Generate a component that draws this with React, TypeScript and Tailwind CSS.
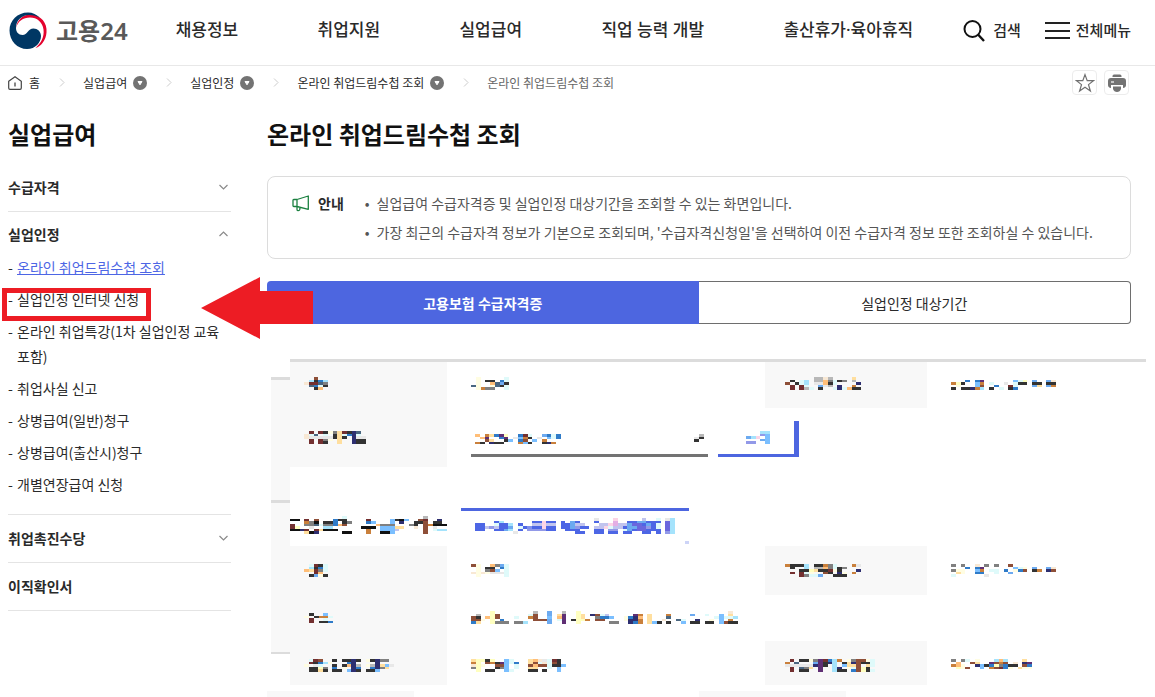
import clsx from 'clsx'
import { ReactNode } from 'react'

const COLORS: Record<string, string> = {
  k: '#333333',
  K: '#111111',
  g: '#808080',
  G: '#b8b8b8',
  e: '#e8e8e8',
  m: '#733030',
  r: '#8e4f38',
  b: '#2f7bc8',
  B: '#4a6680',
  n: '#2e2f70',
  s: '#7bbfff',
  c: '#a5e3fc',
  C: '#dffafa',
  y: '#ffffc0',
  Y: '#fffde2',
  o: '#ffbe78',
  O: '#c9803c',
  p: '#f8e8d4',
  t: '#ffdf9f',
  v: '#5f2f74',
  i: '#4d66e5',
  I: '#7f90ec',
  l: '#9299e8',
  L: '#c1c4ee',
  P: '#e4aee4',
  h: '#fcd4e6',
  a: '#6caaf0',
  V: '#6a66dd',
}

const MASKS = {
  name: ['..r..', '.ckbc', 'pmmBg', '.BbCk', '..ko.'],
  date: [
    '.m.mkYgtmknB.',
    'pCB.C.ktCbnC.',
    'peeeeektk.nee',
    '.m.mgY.t..nkk',
    '.m.mk..t..nkk',
  ],
  nameValue: ['.Y.....C', '.Y.kk.bC', '.Y..oBak', 'BY..YBkC', '.YOgg..C'],
  birth: [
    '......GGpG....t.',
    '.k.Cc.GGogCkg.G.',
    'r.kCc.eeokC....n',
    '.m.mC..aeG.n..O.',
    '.m.mGC.k..CnCokk',
  ],
  birthValue: [
    '......................',
    '...b.bv......sCy.a..ap',
    'Oyk..sO.C..e.Ckk.kk.kk',
    '.Y...sr..b..mC...at.aO',
    'k.kknOc.k.C.kb........',
  ],
  dateValue: [
    'o.Otbvy..bmC..abCb',
    '.ov..bv.esOk.e.sCb',
    '..rt..ks.br.s.O...',
    'Ok.nkk...Osk..knO.',
  ],
  caret: ['.G', 'ek', 'k.'],
  search: ['...cc', '...ls', 'ach.s', '...as', 'll..s'],
  heading: [
    '...........C................G....',
    'KK.m.r...bkk....m....skKs..rm..n.',
    '...OgK.kkb.kg...bs...s.n..kkr.kk.',
    'm..ggBCggbor......oggg...gk.rOKKK',
    'my..e..cc......KKK.ssstt..p.r.e..',
    'KKnm.mtKKK......O..sssL.....r.Ccc',
    '...tKn.....KK...O..KKs......r....',
  ],
  download: [
    '.........................e...h.....L..C.ec',
    '....ic......iihii.i.ai...i...P..iiaaiii.Vc',
    'ii..Ciic.i..LLhLL.iiaLL...LLhPLLaVViaiC.Vc',
    'iiLlLiia.CiIiihii.iialii.LLhCLLiaaVVliC.Vc',
    'ii..iiac.i.llllii..iii...ii.ll.CaiVViii.Vc',
    '........e............ii..ii.ii.ii..ii.i.lc',
  ],
  person: ['.CmkC', '.ckbC', 'otmgC', '..mo.', '.kaYk'],
  personValue: ['rY..ogaC', '.Y.kk.bC', '.Y.grs.C', 'pYpYeeeC', '.Y.....C'],
  number: [
    'Okkkc.kkOgC...Oe',
    '.k..c.GGogCkg...',
    '...kkytkkmYk...n',
    '.m.mCY..rk.nY.O.',
    '...mgCCa..kkk...',
  ],
  numberValue: [
    'g.g..p.g.g..r.........',
    '...b.bv......sCY.a..ap',
    'gYY..sO.CC.b.Ybr.kO.nr',
    '.tY..bb..C..a.........',
    'C......e..............',
  ],
  address: ['.k..s.', 'Y.kOOC', '.m..C.', '.m.kkb'],
  addressValue: [
    '....y........G..a..G..y...............................p.',
    '.G..yr......Cr..a.tv..yt.nrCL.....vO.t...O....a..C..s.t.',
    'rk.oyr...C..Or..s.ov..yt..gbbs..Ybno.t...B.........CsCCc',
    'rrY.y.b......rrra.Cv.kyyO.rr....YnnO.t..p..BC..n..Y.s.O.',
    'bt..yggg.ggc....a..v..y......gg..nbO.tsk.k..s.kk.kk.srkk',
  ],
  period: [
    '.Cmr..k.kknk.Ykngg.',
    '.mkbcY...bn....n...',
    'Y.eC..k.konG.YGntse',
    '.kkyg.b.Y.nb..bngt.',
    '.kktk.kk.snk.kks...',
  ],
  periodValue: [
    'tyyky..sC...topeCmk.',
    'Oy.rOkvsCb..trCpCrk.',
    'pyY..rrs.C..rorrCkks',
    'gy...kgs.C..tt..C.s.',
    '.y.kk..sC...kk.k..s.',
  ],
  office: [
    '.m.kkYgvmbcO.YgrrYC',
    'O.B...avknc.ktnrkkC',
    'eeeeeenvk.c.sttr.tC',
    '.m.Bgt.v..cn.YCryk.',
    '.m.kk..v..ckk.brykC',
  ],
  officeValue: [
    'g.gC.Y...coc...t.',
    '.o..rt..vrOr.p.nv',
    'OoY..nskbygbkk.rb',
    '.yYr..s.OrmbY.tYY',
  ],
}

// personal data is shown only as coarse colour blocks
const Masked = ({ rows }: { rows: string[] }) => {
  const cols = rows[0].length
  return (
    <svg
      className="block"
      width={Math.round((cols * 100) / 21)}
      height={Math.round(rows.length * 2.6)}
      viewBox={`0 0 ${cols} ${rows.length}`}
      preserveAspectRatio="none"
      shapeRendering="crispEdges"
      aria-hidden
    >
      {rows.flatMap((row, y) =>
        row
          .split('')
          .map((c, x) =>
            COLORS[c] ? (
              <rect
                key={`${x}-${y}`}
                x={x}
                y={y}
                width={1}
                height={1}
                fill={COLORS[c]}
              />
            ) : null
          )
      )}
    </svg>
  )
}

const Logo = () => (
  <svg width="40" height="40" viewBox="0 0 40 40" aria-hidden>
    <path
      d="M8 17C9 8 16 2.500 24 3.500C33 4.500 39.500 12 38.500 21.500C38 29 33 35.500 27.500 37C33 32 36.500 26 35.500 18.500C34.500 11 29 6.500 22 6.500C15 6.500 10 10 8 17Z"
      fill="#e4032e"
    />
    <path
      d="M20 1.500C9.500 1.500 1.500 9.500 1.500 19.500C1.500 30 9.500 38 19 38C27.500 38 33 31.500 33 25C33 20.500 29.500 17.500 25.500 17.500C20 17.500 19.500 24 14.500 24C10.500 24 8 21 8 17C8 9.500 13.500 4 21 4C25 4 29 5 32 7C29 3.500 24.500 1.500 20 1.500Z"
      fill="#003764"
    />
  </svg>
)

const SearchIcon = () => (
  <svg width="22" height="24" viewBox="0 0 22 24" fill="none" stroke="#111" aria-hidden>
    <circle cx="9.500" cy="10" r="8" strokeWidth="2" />
    <path d="M15 15.500L21 22" strokeWidth="2.400" />
  </svg>
)

const HamburgerIcon = () => (
  <svg width="25" height="19" viewBox="0 0 25 19" fill="#222" aria-hidden>
    <path d="M0 1h25v2H0zM0 9h25v2H0zM0 16h25v2H0z" />
  </svg>
)

const HomeIcon = () => (
  <svg width="14" height="14" viewBox="0 0 14 14" fill="none" stroke="#444" aria-hidden>
    <path
      d="M.7 5.300L7 .8l6.300 4.500v6.700q0 1.300-1.300 1.300H2Q.7 13.300.7 12z"
      strokeWidth="1.200"
    />
    <path d="M7 6.500v4" strokeWidth="1.300" />
  </svg>
)

const Chevron = ({ up }: { up?: boolean }) => (
  <svg
    width="9"
    height="6"
    viewBox="0 0 9 6"
    fill="none"
    stroke="#8a8a8a"
    strokeWidth="1.200"
    aria-hidden
  >
    <path d={up ? 'M.5 5l4-4 4 4' : 'M.5 1l4 4 4-4'} />
  </svg>
)

const Separator = () => (
  <svg width="6" height="9" viewBox="0 0 6 9" fill="none" stroke="#ccc" aria-hidden>
    <path d="M1 .5l4 4-4 4" />
  </svg>
)

const MegaphoneIcon = () => (
  <svg
    width="18"
    height="17"
    viewBox="0 0 18 17"
    fill="none"
    stroke="#1b8040"
    strokeWidth="1.300"
    strokeLinejoin="round"
    aria-hidden
  >
    <path d="M5 4.500L16.300 1v13.300L5 11.500zM5 4.500H1.800Q1 4.500 1 5.300v5.400q0 .8.800.8H5M5 11.500v3q0 1.200 1.300 1.200t1.500-1.200l.2-2.200" />
  </svg>
)

const StarIcon = () => (
  <svg width="20" height="20" viewBox="0 0 20 20" fill="none" stroke="#707070" aria-hidden>
    <path
      d="M10 1.600l2.200 6h6.300l-5 4 1.900 6.400L10 14.200 4.600 18l1.900-6.400-5-4h6.300z"
      strokeWidth="1.200"
    />
  </svg>
)

const PrinterIcon = () => (
  <svg width="20" height="20" viewBox="0 0 20 20" fill="#737373" aria-hidden>
    <path d="M5.500 4V3q0-1.500 1.500-1.500h6q1.500 0 1.500 1.500v1zM4 5h12q3 0 3 3v4q0 2.500-3 3v-3H4v3q-3-.5-3-3V8q0-3 3-3z" />
    <path d="M6 13.500h8v2.500q-1 3-4 3t-4-3z" />
    <path d="M4 9h3" stroke="#fff" strokeWidth="1.200" />
  </svg>
)

const NAV = ['채용정보', '취업지원', '실업급여', '직업 능력 개발', '출산휴가·육아휴직']

const Header = () => (
  <header className="flex h-[66px] items-center border-b border-[#e8e8e8] pb-1 pl-2 pr-6 font-['Noto_Sans','Noto_Sans_CJK_KR',sans-serif]">
    <a href="#" className="flex items-center gap-2 text-2xl font-semibold text-[#595959]">
      <Logo />
      고용24
    </a>
    <nav className="ml-12 mr-[50px] flex flex-1 justify-between pb-0.5">
      {NAV.map((title) => (
        <a key={title} href="#" className="whitespace-nowrap text-[17px] font-medium">
          {title}
        </a>
      ))}
    </nav>
    <button className="flex items-center gap-2 text-[15px] font-medium">
      <SearchIcon />
      검색
    </button>
    <button className="ml-6 flex items-center gap-1.5 text-[15px] font-medium">
      <HamburgerIcon />
      전체메뉴
    </button>
  </header>
)

const CRUMBS = ['실업급여', '실업인정', '온라인 취업드림수첩 조회']

const Breadcrumb = () => (
  <div className="flex h-[33px] items-center justify-between pl-2 pr-[26px] text-xs">
    <ol className="flex items-center gap-[19px]">
      <li>
        <a href="#" className="flex items-center gap-[7px]">
          <HomeIcon />홈
        </a>
      </li>
      {CRUMBS.map((title) => (
        <li key={title} className="flex items-center gap-[18px]">
          <Separator />
          <button className="flex items-center gap-1.5">
            {title}
            <svg width="14" height="14" viewBox="0 0 14 14" aria-hidden>
              <circle cx="7" cy="7" r="7" fill="#737373" />
              <path d="M5 5.500h4L7 8.800z" fill="#fff" stroke="#fff" strokeLinejoin="round" />
            </svg>
          </button>
        </li>
      ))}
      <li className="flex items-center gap-[18px] text-[#666]">
        <Separator />
        온라인 취업드림수첩 조회
      </li>
    </ol>
    <div className="flex gap-[7px]">
      <button
        aria-label="즐겨찾기"
        className="flex size-[25px] items-center justify-center rounded-sm border border-[#ececec]"
      >
        <StarIcon />
      </button>
      <button
        aria-label="인쇄"
        className="flex size-[25px] items-center justify-center rounded-sm border border-[#ececec]"
      >
        <PrinterIcon />
      </button>
    </div>
  </div>
)

const LINKS = [
  { title: '온라인 취업드림수첩 조회', active: true },
  { title: '실업인정 인터넷 신청', marked: true },
  { title: '온라인 취업특강(1차 실업인정 교육 포함)' },
  { title: '취업사실 신고' },
  { title: '상병급여(일반)청구' },
  { title: '상병급여(출산시)청구' },
  { title: '개별연장급여 신청' },
]

const Marker = () => (
  <>
    <div className="pointer-events-none absolute -left-1.5 top-px z-10 h-[33px] w-[149px] border-[5px] border-[#ed1c24]" />
    <svg
      className="pointer-events-none absolute -top-2.5 left-[193px] z-10"
      width="112"
      height="62"
      viewBox="0 0 112 62"
      fill="#ed1c24"
      aria-hidden
    >
      <path d="M0 31L59 0v14h53v33H59v15z" />
    </svg>
  </>
)

const SideHeading = ({ children, open }: { children: ReactNode; open?: boolean }) => (
  <button
    className={clsx(
      'flex w-full items-center justify-between pr-[3px] text-sm font-bold',
      open ? 'h-[43px]' : 'h-[47px] pb-0.5'
    )}
  >
    {children}
    {open !== undefined && <Chevron up={open} />}
  </button>
)

const Sidebar = () => (
  <aside className="w-[223px] shrink-0">
    <h2 className="text-2xl font-bold leading-[36px] text-[#111]">실업급여</h2>
    <ul className="mt-3">
      <li className="border-b border-[#e4e4e4]">
        <SideHeading open={false}>수급자격</SideHeading>
      </li>
      <li className="border-b border-[#e4e4e4] pb-[17px]">
        <SideHeading open>실업인정</SideHeading>
        <ul className="flex flex-col gap-[7px] text-sm leading-[25px]">
          {LINKS.map(({ title, active, marked }) => (
            <li key={title} className="relative flex">
              <span className="w-[9px] shrink-0">-</span>
              <a
                href="#"
                className={clsx('break-keep', active && 'text-[#4d66e5] underline')}
              >
                {title}
              </a>
              {marked && <Marker />}
            </li>
          ))}
        </ul>
      </li>
      <li className="border-b border-[#e4e4e4]">
        <SideHeading open={false}>취업촉진수당</SideHeading>
      </li>
      <li className="border-b border-[#e4e4e4]">
        <SideHeading>이직확인서</SideHeading>
      </li>
    </ul>
  </aside>
)

const Notice = () => (
  <section className="mt-6 flex rounded-lg border border-[#dcdcdc] pb-[11px] pl-6 pr-4 pt-3 text-sm leading-[29px]">
    <h2 className="flex h-[29px] items-center gap-2 font-bold">
      <MegaphoneIcon />
      안내
    </h2>
    <ul className="ml-[21px] text-[#555]">
      <li className="flex gap-[7px]">
        <span>•</span>
        실업급여 수급자격증 및 실업인정 대상기간을 조회할 수 있는 화면입니다.
      </li>
      <li className="flex gap-[7px]">
        <span>•</span>
        가장 최근의 수급자격 정보가 기본으로 조회되며, '수급자격신청일'을 선택하여 이전
        수급자격 정보 또한 조회하실 수 있습니다.
      </li>
    </ul>
  </section>
)

const Tabs = () => (
  <div role="tablist" className="mt-[22px] flex h-[43px] text-sm">
    <button
      role="tab"
      aria-selected
      className="flex-1 rounded-l bg-[#4d66e0] font-bold text-white"
    >
      고용보험 수급자격증
    </button>
    <button
      role="tab"
      aria-selected={false}
      className="flex-1 rounded-r border border-l-0 border-[#6e6e6e]"
    >
      실업인정 대상기간
    </button>
  </div>
)

const Columns = () => (
  <colgroup>
    <col className="w-[157px]" />
    <col className="w-[318px]" />
    <col className="w-[162px]" />
    <col />
  </colgroup>
)

const Th = ({ rows, className }: { rows: string[]; className: string }) => (
  <th className={clsx('bg-[#f8f8f8] align-top', className)}>
    <Masked rows={rows} />
  </th>
)

const Td = ({
  rows,
  className,
  colSpan,
}: {
  rows: string[]
  className: string
  colSpan?: number
}) => (
  <td colSpan={colSpan} className={clsx('pl-6 align-top', className)}>
    <Masked rows={rows} />
  </td>
)

const Certificate = () => (
  <section className="mt-[35px] flex pl-1 pr-[9px]">
    <div className="mt-[18px] w-[19px] shrink-0">
      <div className="h-[123px] border-t-[3px] border-[#dcdcdc] bg-[#f8f8f8]" />
      <div className="h-[154px] border-b-2 border-t-[3px] border-[#dcdcdc] bg-[#f8f8f8]" />
    </div>
    <div className="min-w-0 flex-1 border-t-[3px] border-[#dcdcdc]">
      <table className="w-full table-fixed">
        <Columns />
        <tbody>
          <tr className="h-[46px]">
            <Th rows={MASKS.name} className="pl-3.5 pt-[15px]" />
            <Td rows={MASKS.nameValue} className="pt-[15px]" />
            <Th rows={MASKS.birth} className="pl-5 pt-[15px]" />
            <Td rows={MASKS.birthValue} className="pt-[15px]" />
          </tr>
          <tr className="h-[59px]">
            <Th rows={MASKS.date} className="pl-3.5 pt-[23px]" />
            <td colSpan={3} className="pl-6 pt-[13px] align-top">
              <div className="flex gap-2.5">
                <button
                  aria-label="수급자격신청일"
                  className="flex h-[36px] w-[237px] items-start justify-between border-b-[3px] border-[#737373] pl-1 pr-1 pt-[13px]"
                >
                  <Masked rows={MASKS.dateValue} />
                  <Masked rows={MASKS.caret} />
                </button>
                <button
                  aria-label="조회"
                  className="flex h-[36px] w-[81px] items-start border-b-[3px] border-r-[5px] border-[#4d66e0] pl-7 pt-2.5"
                >
                  <Masked rows={MASKS.search} />
                </button>
              </div>
            </td>
          </tr>
        </tbody>
      </table>
      <div className="flex h-[79px] items-start gap-3.5 pt-[41px]">
        <div className="pt-2">
          <Masked rows={MASKS.heading} />
        </div>
        <button
          aria-label="수급자격증"
          className="flex h-[36px] w-[228px] items-start border-t-[3px] border-[#4d66e0] pl-3.5 pt-[7px]"
        >
          <Masked rows={MASKS.download} />
          <span className="ml-auto h-[3px] w-1 self-end bg-[#cdd4f7]" />
        </button>
      </div>
      <table className="w-full table-fixed">
        <Columns />
        <tbody>
          <tr className="h-[49px]">
            <Th rows={MASKS.person} className="pl-3.5 pt-[18px]" />
            <Td rows={MASKS.personValue} className="pt-[18px]" />
            <Th rows={MASKS.number} className="pl-5 pt-[18px]" />
            <Td rows={MASKS.numberValue} className="pt-[18px]" />
          </tr>
          <tr className="h-[46px]">
            <Th rows={MASKS.address} className="pl-3.5 pt-[18px]" />
            <Td rows={MASKS.addressValue} className="pt-4" colSpan={3} />
          </tr>
          <tr className="h-[44px]">
            <Th rows={MASKS.period} className="pl-3.5 pt-[18px]" />
            <Td rows={MASKS.periodValue} className="pt-[18px]" />
            <Th rows={MASKS.office} className="pl-5 pt-[18px]" />
            <Td rows={MASKS.officeValue} className="pt-[18px]" />
          </tr>
        </tbody>
      </table>
    </div>
  </section>
)

export default function App() {
  return (
    <div className="bg-white font-['Noto_Sans_CJK_KR',sans-serif] text-[#2a2a2a]">
      <Header />
      <Breadcrumb />
      <div className="flex gap-9 pl-2 pt-[17px]">
        <Sidebar />
        <main className="min-w-0 flex-1">
          <div className="pr-6">
            <h1 className="text-2xl font-bold leading-[36px] text-[#111]">
              온라인 취업드림수첩 조회
            </h1>
            <Notice />
            <Tabs />
          </div>
          <Certificate />
          <div className="mt-1.5 grid h-1.5 grid-cols-2 pr-6">
            <div className="w-[147px] bg-[#f8f8f8]" />
            <div className="w-[147px] bg-[#f8f8f8]" />
          </div>
        </main>
      </div>
    </div>
  )
}
